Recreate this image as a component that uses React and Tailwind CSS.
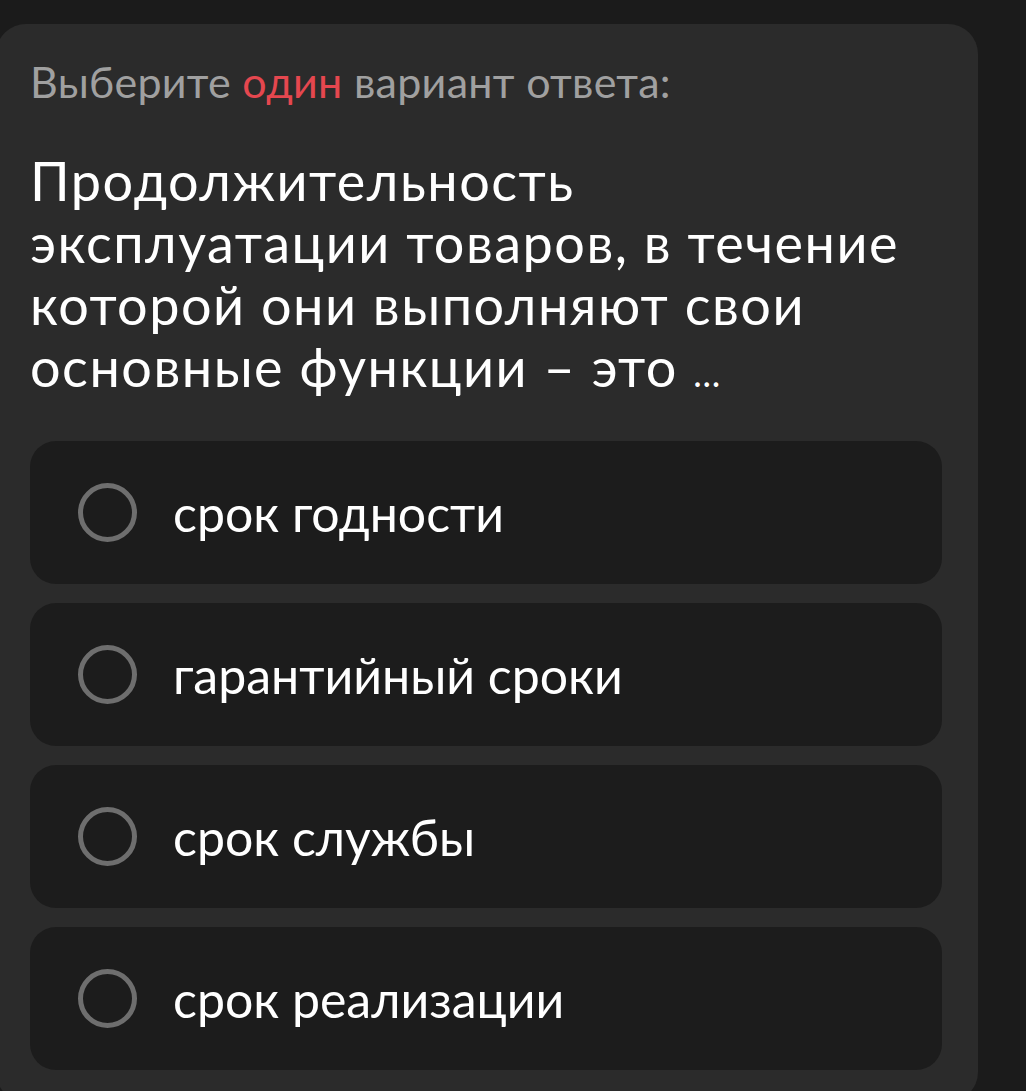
import React from 'react'

const options = ['срок годности', 'гарантийный сроки', 'срок службы', 'срок реализации']

export default function App() {
  return (
    <div className="h-[1091px] overflow-hidden bg-[#1b1b1b] pt-6" style={{ fontFamily: 'Lato, "Open Sans", sans-serif' }}>
      <div className="ml-[-4px] w-[982px] rounded-[30px] bg-[#2b2b2b] pl-[34px] pr-[36px] pt-[34px] pb-8">
        <p className="text-[43px] leading-[48px] tracking-[0.3px] text-[#a0a0a0]">
          Выберите <span className="text-[#e5474f]">один</span> вариант ответа:
        </p>
        <p className="mt-[44px] text-[54px] leading-[62px] tracking-[1.5px] text-white">
          Продолжительность эксплуатации товаров, в течение которой они выполняют свои основные функции – это{' '}
          <span className="text-[36px] leading-none tracking-normal">…</span>
        </p>
        <div className="mt-[43px] flex flex-col gap-[19px]">
          {options.map((o) => (
            <div key={o} className="flex h-[143px] items-center rounded-[26px] bg-[#1c1c1c] pl-[48px]">
              <span className="h-[59px] w-[59px] shrink-0 rounded-full border-[5px] border-[#6e6e6e]" />
              <span className="ml-[36px] text-[50px] leading-none text-white">{o}</span>
            </div>
          ))}
        </div>
      </div>
    </div>
  )
}
